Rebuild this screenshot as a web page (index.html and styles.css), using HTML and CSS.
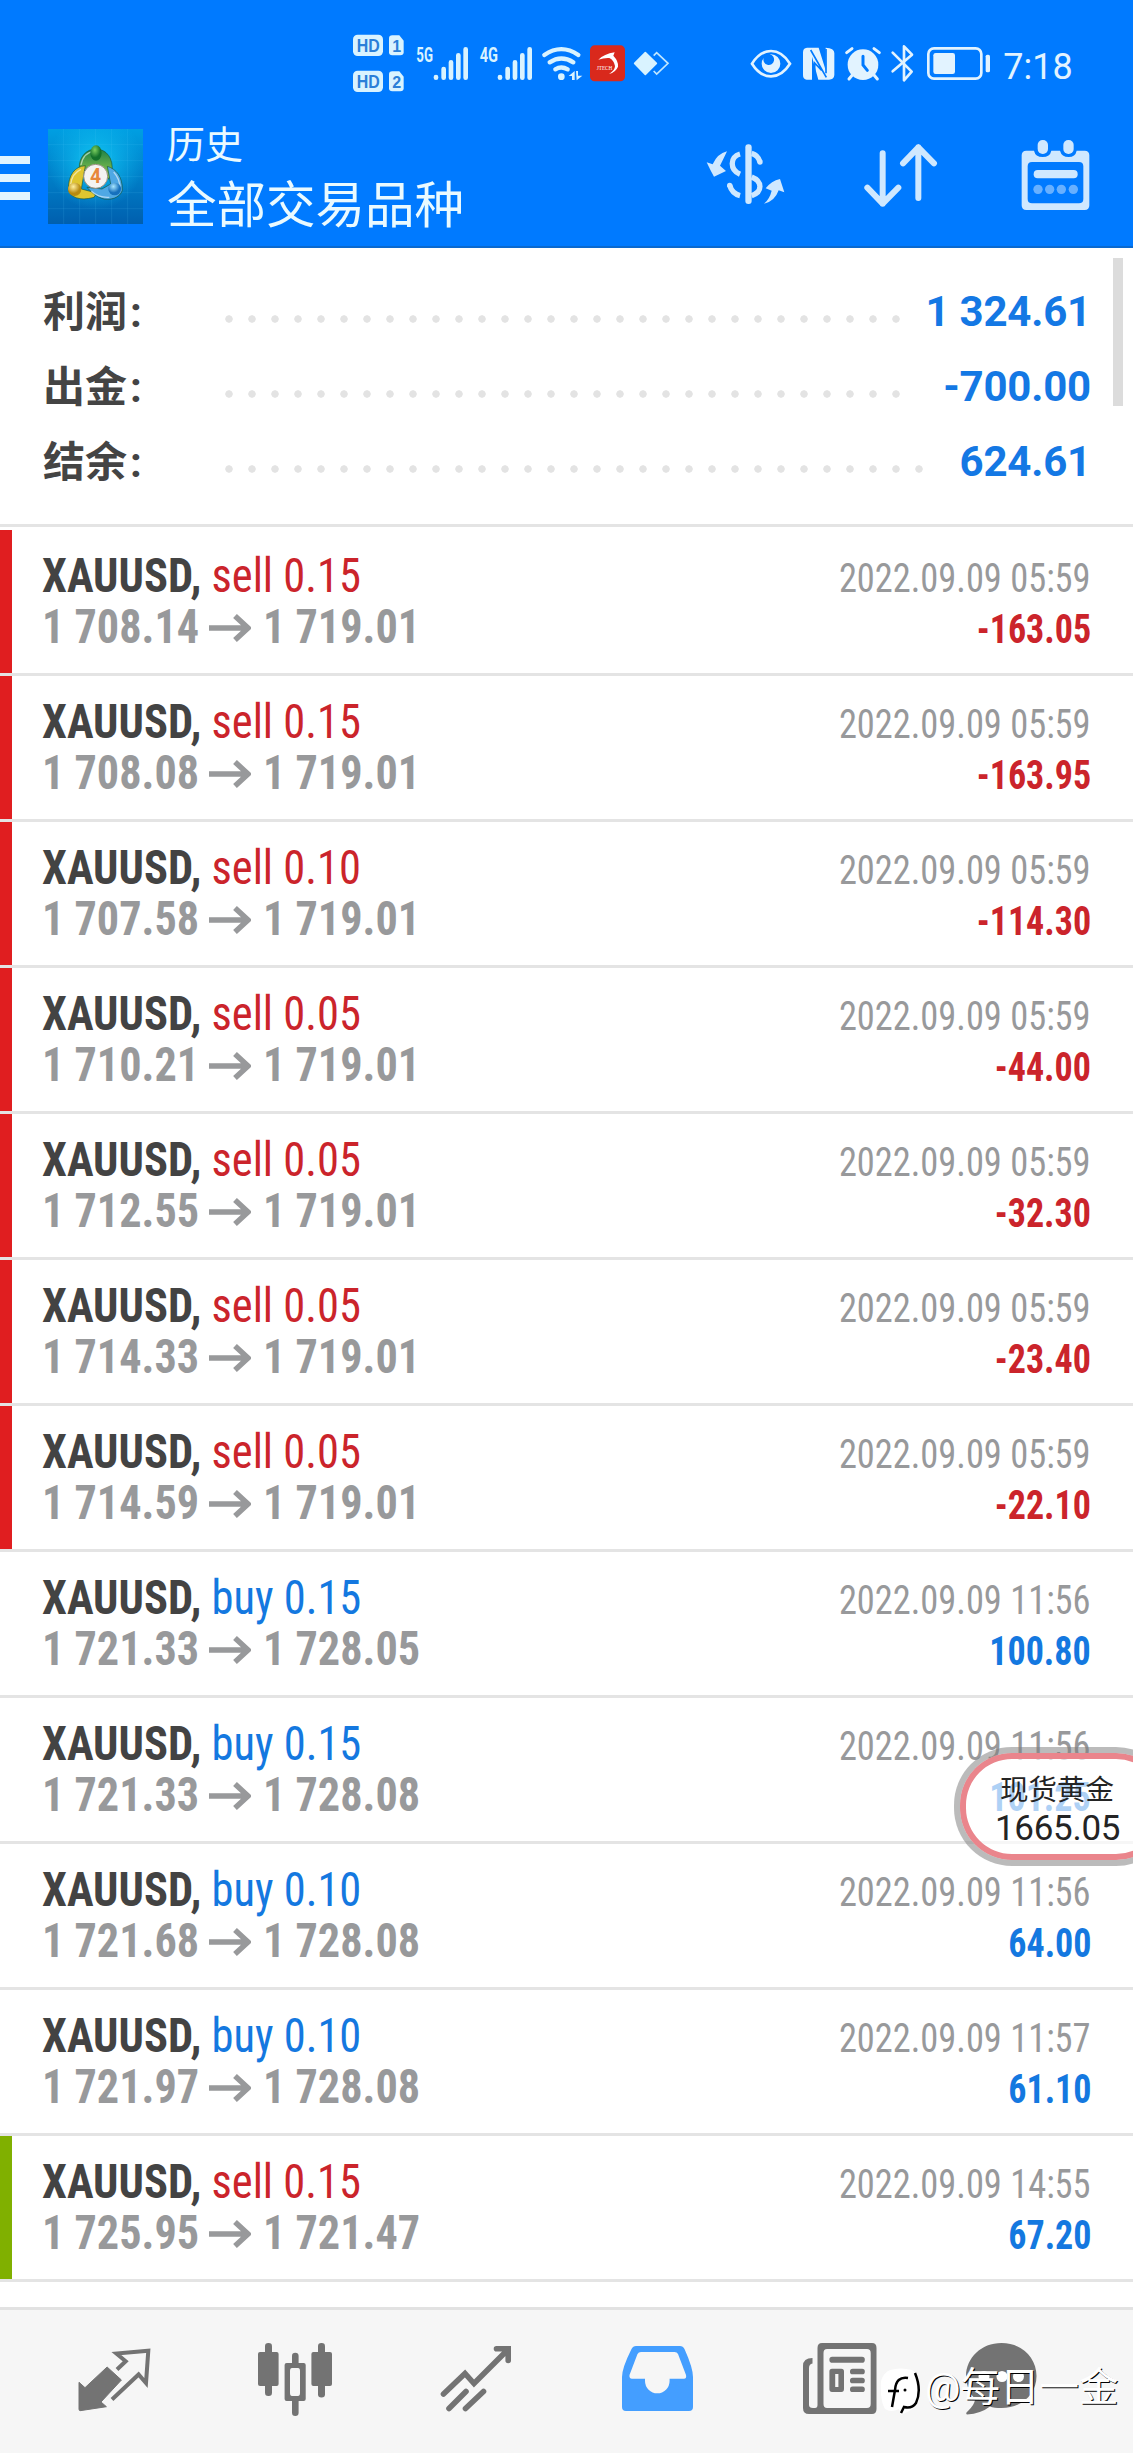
FILE: index.html
```
<!DOCTYPE html>
<html lang="zh-CN">
<head>
<meta charset="utf-8">
<title>历史</title>
<link rel="stylesheet" href="styles.css">
</head>
<body>
<svg width="0" height="0" class="defs"><defs>
<symbol id="arrow" viewBox="0 0 42 28"><path d="M0 14H39M26 2L39 14L26 26" fill="none" stroke="#98999b" stroke-width="5.5"/></symbol>
</defs></svg>
<header class="header">
  <div class="status">
    <svg width="350" height="90" viewBox="0 0 1050 270" fill="#d9f3ff">
      <rect x="39" y="44" width="90" height="64" rx="14"/><path d="M157 46H178L191 62V97Q191 106 181 106H157Q147 106 147 97V56Q147 46 157 46Z"/>
      <rect x="39" y="152" width="90" height="64" rx="14"/><path d="M157 154H178L191 170V205Q191 214 181 214H157Q147 214 147 205V164Q147 154 157 154Z"/>
      <g class="badge"><text x="50" y="95" textLength="69" lengthAdjust="spacingAndGlyphs">HD</text><text x="157" y="95">1</text><text x="50" y="203" textLength="69" lengthAdjust="spacingAndGlyphs">HD</text><text x="157" y="203">2</text></g>
      <g class="net"><text x="229" y="125" textLength="50" lengthAdjust="spacingAndGlyphs">5G</text><text x="419" y="125" textLength="55" lengthAdjust="spacingAndGlyphs">4G</text></g>
      <g stroke="#d9f3ff" stroke-width="14" stroke-linecap="round"><path d="M288 171V173M311 147V173M333 127V173M355 106V173M377 88V173"/><path d="M480 171V173M503 147V173M525 127V173M547 106V173M569 88V173"/></g>
      <g fill="none" stroke="#d9f3ff" stroke-width="13" stroke-linecap="round"><path d="M613 105Q664 70 715 105"/><path d="M629 127Q664 104 700 127"/><path d="M646 148Q664 137 683 148"/></g>
      <circle cx="664" cy="170" r="10"/><path d="M686 168L704 153V180H696V168ZM708 153H714V167H727L710 181Z"/>
      <rect x="750" y="76" width="105" height="108" rx="14" fill="#d9291c"/>
      <path d="M775 119Q792 102 824 97L820 107Q836 124 834 140Q827 157 807 162Q825 151 825 138Q822 121 808 114Q792 113 775 119Z" fill="#fff"/>
      <text x="770" y="149" class="jtech" textLength="47" lengthAdjust="spacingAndGlyphs">JTECH</text>
      <path d="M916 98L949 130L916 163L884 130Z" stroke="#d9f3ff" stroke-width="5" stroke-linejoin="round"/><path d="M941 107L950 98L984 130L950 162L941 153" fill="none" stroke="#bfe6ff" stroke-width="5"/>
    </svg>
    <svg width="403" height="90" viewBox="0 0 1209 270" fill="#e2f3ff">
      <path d="M66 131Q90 93 123 93Q156 93 180 131Q156 169 123 169Q90 169 66 131Z" fill="none" stroke="#e2f3ff" stroke-width="8"/>
      <path d="M123 103A28 28 0 1 1 95 131A27 27 0 0 1 101 114A16 16 0 1 0 119 103Z"/>
      <path d="M231 83H266L287 151V83Q313 84 313 99V165Q312 179 297 179H265L246 110V179H230Q219 178 219 165V97Q219 84 231 83Z"/>
      <path d="M242 90L289 172M254 176V129L275 151M288 87V160" stroke="#007aff" stroke-width="5" fill="none"/>
      <circle cx="399" cy="134" r="46"/><path d="M367 165L357 177M432 165L442 177M350 98L366 86M448 98L432 86" stroke="#e2f3ff" stroke-width="9" stroke-linecap="round"/>
      <path d="M399 109V135L412 151" fill="none" stroke="#007aff" stroke-width="9" stroke-linecap="round"/>
      <path d="M488 98L545 155L522 181V79L546 104L488 154" fill="none" stroke="#e2f3ff" stroke-width="8" stroke-linecap="round" stroke-linejoin="round"/>
      <rect x="595" y="85" width="159" height="91" rx="17" fill="none" stroke="#e2f3ff" stroke-width="8"/><rect x="610" y="99" width="65" height="63" rx="7"/><rect x="767" y="104" width="13" height="53" rx="5"/>
      <text x="820" y="178" class="clock" textLength="208" lengthAdjust="spacingAndGlyphs">7:18</text>
    </svg>
  </div>
  <div class="toolbar">
    <div class="menu"><i></i><i></i><i></i></div>
    <svg class="logo" viewBox="0 0 285 285">
      <defs><linearGradient id="sky" x2="0" y2="1"><stop stop-color="#009fe2"/><stop offset="1" stop-color="#005fae"/></linearGradient><radialGradient id="glow" cx=".5" cy=".35"><stop stop-color="#10c8f4"/><stop offset="1" stop-color="#10b8ee" stop-opacity="0"/></radialGradient>
      <linearGradient id="gr" x2="0" y2="1"><stop stop-color="#1d7f45"/><stop offset="1" stop-color="#9bd04f"/></linearGradient><radialGradient id="gg" cx=".4" cy=".3"><stop stop-color="#7dd060"/><stop offset="1" stop-color="#14712a"/></radialGradient><radialGradient id="gy" cx=".4" cy=".3"><stop stop-color="#fff0a0"/><stop offset="1" stop-color="#b88a10"/></radialGradient><radialGradient id="gb" cx=".4" cy=".3"><stop stop-color="#a8e6ff"/><stop offset="1" stop-color="#1670bd"/></radialGradient></defs>
      <rect width="285" height="285" fill="url(#sky)"/><rect width="285" height="285" fill="url(#glow)"/>
      <path d="M47 0V285M95 0V285M143 0V285M191 0V285M239 0V285M0 47H285M0 95H285M0 143H285M0 191H285M0 239H285" stroke="#5ad0ff" stroke-opacity=".2" stroke-width="2"/>
      <g stroke="#15502f" stroke-opacity=".6" stroke-width="3">
      <path d="M94 118C92 85 115 60 143 60C176 60 197 88 192 130L181 151L168 118H118L108 125Z" fill="url(#gr)"/>
      <path d="M112 110C80 112 61 138 61 180C65 205 95 217 138 205L146 192L100 180Z" fill="#dfc630"/>
      <path d="M178 112C204 120 224 142 223 184C216 207 185 216 161 208C142 201 127 187 117 175L162 180L188 165Z" fill="#4fa8e4"/></g>
      <path d="M99 108Q106 70 139 67M68 166Q72 133 99 121M197 129Q216 150 216 178M130 187Q152 207 184 205" stroke="#fff" stroke-opacity=".55" stroke-width="4" fill="none"/>
      <ellipse cx="144" cy="72" rx="17" ry="23" fill="url(#gg)"/><circle cx="80" cy="181" r="20" fill="url(#gy)"/><circle cx="200" cy="180" r="19" fill="url(#gb)"/>
      <circle cx="143" cy="142" r="36" fill="#f4f3f2" stroke="#9b9184" stroke-width="3"/><text x="126" y="163" class="four">4</text>
    </svg>
    <div class="titles"><div class="title">历史</div><div class="subtitle">全部交易品种</div></div>
    <div class="actions">
      <svg width="81" height="73" viewBox="75 55 243 219" fill="#cfe8ff">
        <path d="M141 95Q128 123 120 138L138 154L102 171Q91 152 80 128L98 134Q112 102 141 95ZM252 252Q269 238 275 213L257 206Q274 184 300 178Q306 196 313 218L296 212Q284 246 252 252Z"/>
        <rect x="196" y="74" width="19" height="179" rx="9"/>
        <path d="M180 103C149 111 149 151 180 164M149 197Q156 222 180 228M215 101Q234 106 240 127M215 172C248 185 248 217 215 228" fill="none" stroke="#cfe8ff" stroke-width="16"/><circle cx="240" cy="127" r="8"/><circle cx="149" cy="197" r="8"/>
      </svg>
      <svg width="76" height="73" viewBox="546 55 228 219"><path d="M608 101V252M562 204L608 252L655 204M715 235V83M669 131L715 83L762 131" fill="none" stroke="#cfe8ff" stroke-width="18" stroke-linecap="round" stroke-linejoin="round"/></svg>
      <svg width="71" height="73" viewBox="1020 55 213 219" fill="#cfe8ff">
        <path fill-rule="evenodd" d="M1039 93H1062Q1066 112 1088 112Q1110 112 1114 93H1140Q1145 112 1166 112Q1186 112 1190 93H1214Q1228 93 1228 107V257Q1228 271 1214 271H1039Q1025 271 1025 257V107Q1025 93 1039 93ZM1056 127Q1043 127 1043 140V238Q1043 251 1056 251H1197Q1210 251 1210 238V140Q1210 127 1197 127Z"/>
        <rect x="1073" y="61" width="31" height="42" rx="15"/><rect x="1150" y="61" width="31" height="42" rx="15"/><rect x="1061" y="151" width="132" height="25" rx="12"/>
        <g fill="#68b0ff"><circle cx="1074" cy="209" r="14"/><circle cx="1109" cy="209" r="14"/><circle cx="1144" cy="209" r="14"/><circle cx="1180" cy="209" r="14"/></g>
      </svg>
    </div>
  </div>
</header>
<section class="summary">
  <div class="sum"><span class="label">利润<em>:</em></span><i class="dots"></i><b>1 324.61</b></div>
  <div class="sum"><span class="label">出金<em>:</em></span><i class="dots"></i><b>-700.00</b></div>
  <div class="sum"><span class="label">结余<em>:</em></span><i class="dots wide"></i><b>624.61</b></div>
  <div class="scroll"></div>
</section>
<main class="deals">
  <article class="deal loss"><div class="line"><div class="order"><b class="sym">XAUUSD,</b><span class="side sell">sell 0.15</span></div><time>2022.09.09 05:59</time></div><div class="line"><div class="price"><span>1 708.14</span><svg><use href="#arrow"/></svg><span>1 719.01</span></div><b class="pl sell">-163.05</b></div></article>
  <article class="deal loss"><div class="line"><div class="order"><b class="sym">XAUUSD,</b><span class="side sell">sell 0.15</span></div><time>2022.09.09 05:59</time></div><div class="line"><div class="price"><span>1 708.08</span><svg><use href="#arrow"/></svg><span>1 719.01</span></div><b class="pl sell">-163.95</b></div></article>
  <article class="deal loss"><div class="line"><div class="order"><b class="sym">XAUUSD,</b><span class="side sell">sell 0.10</span></div><time>2022.09.09 05:59</time></div><div class="line"><div class="price"><span>1 707.58</span><svg><use href="#arrow"/></svg><span>1 719.01</span></div><b class="pl sell">-114.30</b></div></article>
  <article class="deal loss"><div class="line"><div class="order"><b class="sym">XAUUSD,</b><span class="side sell">sell 0.05</span></div><time>2022.09.09 05:59</time></div><div class="line"><div class="price"><span>1 710.21</span><svg><use href="#arrow"/></svg><span>1 719.01</span></div><b class="pl sell">-44.00</b></div></article>
  <article class="deal loss"><div class="line"><div class="order"><b class="sym">XAUUSD,</b><span class="side sell">sell 0.05</span></div><time>2022.09.09 05:59</time></div><div class="line"><div class="price"><span>1 712.55</span><svg><use href="#arrow"/></svg><span>1 719.01</span></div><b class="pl sell">-32.30</b></div></article>
  <article class="deal loss"><div class="line"><div class="order"><b class="sym">XAUUSD,</b><span class="side sell">sell 0.05</span></div><time>2022.09.09 05:59</time></div><div class="line"><div class="price"><span>1 714.33</span><svg><use href="#arrow"/></svg><span>1 719.01</span></div><b class="pl sell">-23.40</b></div></article>
  <article class="deal loss"><div class="line"><div class="order"><b class="sym">XAUUSD,</b><span class="side sell">sell 0.05</span></div><time>2022.09.09 05:59</time></div><div class="line"><div class="price"><span>1 714.59</span><svg><use href="#arrow"/></svg><span>1 719.01</span></div><b class="pl sell">-22.10</b></div></article>
  <article class="deal"><div class="line"><div class="order"><b class="sym">XAUUSD,</b><span class="side buy">buy 0.15</span></div><time>2022.09.09 11:56</time></div><div class="line"><div class="price"><span>1 721.33</span><svg><use href="#arrow"/></svg><span>1 728.05</span></div><b class="pl buy">100.80</b></div></article>
  <article class="deal"><div class="line"><div class="order"><b class="sym">XAUUSD,</b><span class="side buy">buy 0.15</span></div><time>2022.09.09 11:56</time></div><div class="line"><div class="price"><span>1 721.33</span><svg><use href="#arrow"/></svg><span>1 728.08</span></div><b class="pl buy">101.25</b></div></article>
  <article class="deal"><div class="line"><div class="order"><b class="sym">XAUUSD,</b><span class="side buy">buy 0.10</span></div><time>2022.09.09 11:56</time></div><div class="line"><div class="price"><span>1 721.68</span><svg><use href="#arrow"/></svg><span>1 728.08</span></div><b class="pl buy">64.00</b></div></article>
  <article class="deal"><div class="line"><div class="order"><b class="sym">XAUUSD,</b><span class="side buy">buy 0.10</span></div><time>2022.09.09 11:57</time></div><div class="line"><div class="price"><span>1 721.97</span><svg><use href="#arrow"/></svg><span>1 728.08</span></div><b class="pl buy">61.10</b></div></article>
  <article class="deal gain"><div class="line"><div class="order"><b class="sym">XAUUSD,</b><span class="side sell">sell 0.15</span></div><time>2022.09.09 14:55</time></div><div class="line"><div class="price"><span>1 725.95</span><svg><use href="#arrow"/></svg><span>1 721.47</span></div><b class="pl buy">67.20</b></div></article>
</main>
<nav class="nav">
  <svg viewBox="75 2340 80 80"><path d="M79 2382.3L85 2387.7L107.1 2367L121.4 2380L101 2402L106.4 2406.7L80 2410.7Q79 2410.5 79 2409Z" fill="#737373" stroke="#737373" stroke-linejoin="round"/><path d="M117 2369.5L125.7 2361.3L116.4 2353.5L148.3 2350.7L146 2383L138.6 2374.5L112 2399.5" fill="none" stroke="#737373" stroke-width="4"/></svg>
  <svg viewBox="256 2340 80 80" fill="#737373"><rect x="258" y="2352" width="20.6" height="34" rx="2"/><rect x="265" y="2343" width="7" height="53" rx="3.3"/><path fill-rule="evenodd" d="M286.6 2363H303.7Q305.7 2363 305.7 2365V2399Q305.7 2401 303.7 2401H286.6Q284.6 2401 284.6 2399V2365Q284.6 2363 286.6 2363ZM292 2368Q290 2368 290 2371V2393Q290 2396 292 2396H298Q300 2396 300 2393V2371Q300 2368 298 2368Z"/><rect x="292" y="2352.7" width="6.6" height="14" rx="3.3"/><rect x="292" y="2398" width="6.6" height="18" rx="3.3"/><rect x="311.4" y="2352" width="20.6" height="34" rx="2"/><rect x="318" y="2343" width="7" height="54.6" rx="3.3"/></svg>
  <svg viewBox="437 2340 80 80" fill="none" stroke="#737373" stroke-width="5.6" stroke-linecap="round"><path d="M443.5 2394L465 2373.5L474 2383.5L508 2349.5M496.5 2348.8H508.2V2360.5M449 2408.5L466 2391.5M465.5 2408.5L483.5 2391.5"/></svg>
  <svg viewBox="618 2340 80 80"><path fill="#449eff" fill-rule="evenodd" d="M636 2346H680Q683 2346 684.5 2349Q693 2368 693 2377V2407Q693 2411 689 2411H626Q622 2411 622 2407V2377Q622 2368 631.500 2349Q633 2346 636 2346ZM641 2352Q638.500 2352 637.5 2354L629.5 2375Q629 2378.700 632 2378.700H645V2381A12.300 12.300 0 0 0 669.600 2381V2378.700H684Q686.800 2378.700 686 2375L678 2354Q677 2352 674.500 2352Z"/></svg>
  <svg viewBox="799 2340 80 80" fill="#737373"><path fill-rule="evenodd" d="M822 2343H872Q876.5 2343 876.5 2348V2409Q876.5 2414 872 2414H809Q803 2414 803 2408V2366Q803 2358 812.5 2358V2363.500Q809 2364 809 2368V2405Q809 2408 813 2408H815Q817.500 2408 817.500 2405V2348Q817.500 2343 822 2343ZM827 2349Q823.500 2349 823.500 2353V2404Q823.500 2408 827 2408H867Q870.700 2408 870.700 2404V2353Q870.700 2349 867 2349Z"/><rect x="829.400" y="2356.700" width="35.400" height="6" rx="2.800"/><path fill-rule="evenodd" d="M832 2368.700H841.400Q844 2368.700 844 2371.500V2389Q844 2392 841.400 2392H832Q829.400 2392 829.400 2389V2371.500Q829.400 2368.700 832 2368.700ZM835.200 2374V2387H838.400V2374Z"/><rect x="850" y="2368.700" width="14.800" height="5.600" rx="2.600"/><rect x="850" y="2377.700" width="14.800" height="5.600" rx="2.600"/><rect x="850" y="2386.500" width="14.800" height="5.600" rx="2.600"/></svg>
  <svg class="chat" viewBox="960 2340 80 80"><path fill="#737373" d="M1001.500 2343C1022 2343 1036.500 2358 1036.500 2376C1036.500 2394 1022 2408 1001.500 2408Q994 2408 990 2406.500Q981 2413.500 967 2414.500Q965 2413.500 968 2411Q975 2404 975 2399Q966 2390 966 2375.500C966.500 2358 981 2343 1001.500 2343Z"/><circle cx="984" cy="2376.500" r="5.500" fill="#fff"/><circle cx="1002" cy="2376.500" r="5.500" fill="#fff"/><circle cx="1018.500" cy="2376.500" r="5.500" fill="#fff"/></svg>
</nav>
<div class="quote"><span>现货黄金</span><strong>1665.05</strong></div>
<div class="mark"><svg width="42" height="48" viewBox="0 0 42 48"><path d="M10 2Q20-1 32 2Q41 7 40 25Q40 34 34 40Q28 44 21 47L19 41Q11 45 5 41Q0 34 1 13Q3 5 10 2Z" fill="#fff"/><path d="M28 10Q16 8 15 22L12 39M8 23H19M35 5Q42 22 36 35Q32 41 24 39L21 45" fill="none" stroke="#000" stroke-width="2.500"/><circle cx="25" cy="22" r="1.500"/></svg><span>@每日一金</span></div>
</body>
</html>
```
FILE: styles.css
```
* { box-sizing: border-box; }
body { margin: 0; width: 1133px; height: 2453px; overflow: hidden; position: relative; background: #fff; font-family: Roboto, "Noto Sans CJK SC", sans-serif; display: flex; flex-direction: column; }
svg { display: block; flex: none; }
.defs { position: absolute; }
.header { height: 248px; background: #007aff; border-bottom: 2px solid #0a69cf; flex: none; }
.status { display: flex; gap: 40px; padding: 20px 0 0 340px; height: 110px; }
.badge { font: 700 54px "Liberation Sans", sans-serif; fill: #2b7fd8; }
.badge text:nth-child(even) { font-size: 48px; }
.net { font: 700 59px Roboto, sans-serif; }
.jtech { font: 20px "Liberation Serif", serif; fill: #fff; }
.clock { font: 400 112px Roboto, sans-serif; }
.toolbar { display: flex; height: 136px; }
.menu { width: 30px; padding-top: 46px; display: flex; flex-direction: column; gap: 10px; flex: none; }
.menu i { height: 8px; background: #e2f5ff; flex: none; }
.logo { width: 95px; height: 95px; margin: 19px 24px 0 18px; }
.four { font: 700 58px Roboto, sans-serif; fill: #e7873c; }
.titles { color: #eafaff; width: 300px; flex: none; }
.title { font-size: 38px; line-height: 50px; margin-top: 10px; }
.subtitle { font-size: 49.500px; line-height: 72px; white-space: nowrap; }
.actions { display: flex; margin: 28px 0 0 238px; }
.actions svg + svg { margin-left: 76px; }
.actions svg + svg + svg { margin-left: 82px; }
.summary { position: relative; height: 279px; padding: 26px 42px 0; border-bottom: 3px solid #e4e4e4; flex: none; }
.sum { display: flex; height: 75px; align-items: center; font-size: 42px; line-height: 75px; justify-content: space-between; }
.label { font-weight: 700; color: #444; width: 183px; flex: none; padding-top: 2px; padding-left: 1px; }
.label em { font-style: normal; margin-left: 3px; }
.sum b { color: #1478e4; margin-left: auto; white-space: pre; letter-spacing: -.2px; }
.dots { width: 690px; height: 8px; margin-top: 14px; flex: none; background: radial-gradient(circle at 4px 4px, #e3e3e3 3.400px, transparent 4px) 0 0 / 23px 8px repeat-x; }
.dots.wide { width: 713px; }
.scroll { position: absolute; left: 1113px; top: 10px; width: 10px; height: 148px; background: #dcdcdc; }
.deals { padding-top: 3px; flex: none; }
.deal { height: 146px; border-bottom: 3px solid #e4e4e4; padding: 20px 42px 0 42px; position: relative; }
.loss { background: linear-gradient(#e01e20, #e01e20) 0 0 / 12px 100% no-repeat; }
.gain { background: linear-gradient(#80b000, #80b000) 0 0 / 12px 100% no-repeat; }
.line { height: 51px; line-height: 51px; display: flex; justify-content: space-between; align-items: baseline; font-family: "Roboto Condensed", Roboto, sans-serif; font-stretch: 75%; font-size: 48px; white-space: nowrap; }
.order { transform: scaleX(.927); transform-origin: 0 0; }
.sym { color: #434343; }
.side { margin-left: 11px; }
.line time { font-size: 40px; color: #98999b; transform: scaleX(.91); transform-origin: 100% 0; }
.pl { font-size: 40px; transform: scaleX(.9); transform-origin: 100% 0; }
.sell { color: #cb242b; }
.buy { color: #1478e0; }
.price { display: flex; font-weight: 700; color: #98999b; }
.price span { width: 167px; margin-right: -11px; transform: scaleX(.921); transform-origin: 0 0; }
.price svg { width: 42px; height: 28px; margin: 13px 12px 0 11px; }
.nav { height: 146px; margin-top: 25px; border-top: 3px solid #e2e2e2; background: #f6f6f6; padding: 30px 0 0 75px; display: flex; gap: 101px; flex: none; }
.nav svg { width: 80px; height: 80px; }
.nav .chat { margin-left: -20px; }
.quote { position: absolute; left: 954px; top: 1747px; width: 220px; height: 119px; border: 6px solid rgba(125,125,125,.52); border-radius: 58px; padding: 21px 0 0 35px; background: rgba(255,255,255,.66); background-clip: padding-box; box-shadow: inset 0 0 0 6px #ea858c; color: #242424; display: flex; flex-direction: column; white-space: nowrap; }
.quote span { font-size: 28.500px; line-height: 33px; padding-left: 5px; }
.quote strong { font-weight: 400; font-size: 35px; line-height: 43px; letter-spacing: -.3px; }
.mark { position: absolute; left: 880px; top: 2368px; display: flex; color: #fff; font-size: 39.500px; line-height: 48px; text-shadow: 1px 1px 0 #000; white-space: nowrap; }
.mark span { padding-left: 3px; margin-top: -4px; }
```
